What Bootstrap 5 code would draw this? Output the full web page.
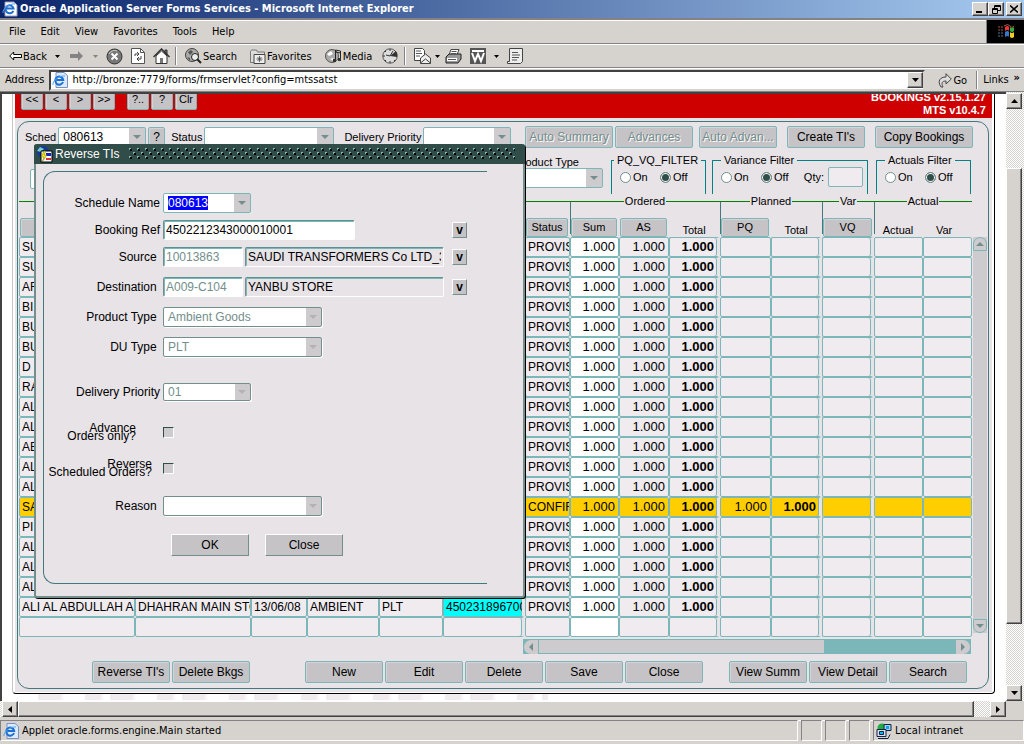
<!DOCTYPE html>
<html lang="en">
<head>
<meta charset="utf-8">
<meta name="viewport" content="width=device-width, initial-scale=1">
<title>Oracle Application Server Forms Services</title>
<link href="https://cdn.jsdelivr.net/npm/bootstrap@5.3.0/dist/css/bootstrap.min.css" rel="stylesheet">
<style>
:root{--face:#d6d3ce;--teal:#7bb6b8;--deep:#42797b;--ap:#e7e3e7;--key:#c6c3c6}
body{font-family:"DejaVu Sans Condensed","DejaVu Sans",sans-serif;font-size:11px;line-height:14px;color:#000;background:var(--face)}
a{color:#000;text-decoration:none}
button,input,select{font:inherit;color:inherit;border-radius:0;padding:0}
button{line-height:1}
svg{display:block;flex:none}
/* browser window */
.titlebar{height:18px;padding:0 2px;gap:2px;background:linear-gradient(90deg,#0a246a,#a6caf0);color:#fff;font-weight:700}
.raised{background:var(--face);border:1px solid;border-color:#fff #424142 #424142 #fff;box-shadow:inset -1px -1px #848284;display:flex;align-items:center;justify-content:center;flex:none}
.winkey{width:16px;height:14px}
.chrome-bar{border-top:1px solid #fff;border-bottom:1px solid #848284;background:var(--face)}
.menubar{height:26px;border-top:2px solid #848284;box-shadow:inset 0 1px #fff}
.menubar nav{gap:15px;padding-left:9px}
.flagbox{width:38px;background:#000;border-left:1px solid #848284}
.toolbar{height:24px;padding-left:9px}
.toolbtn{background:none;border:0;display:flex;align-items:center;gap:1px}
.s5{margin-left:5px}.s10{margin-left:10px}.s13{margin-left:13px}
.vsep{width:2px;height:18px;border-left:1px solid #848284;border-right:1px solid #fff}
.addressbar{height:24px;padding-left:5px;gap:5px}
.addrbox{height:21px;background:#fff;border:2px solid;border-color:#424142 var(--face) var(--face) #424142;padding:0 0 0 1px}
.addrbox input{border:0;outline:0;background:none}
.sbtn{width:16px;height:16px}
.track{background:conic-gradient(#fff 25%,var(--face) 0 50%,#fff 0 75%,var(--face) 0) 0 0/2px 2px}
.view{border-top:2px solid #424142;border-left:2px solid #424142;background:#fff;overflow:hidden}
.statusbar{height:27px;border-top:3px solid var(--face);gap:3px;padding-bottom:3px;box-shadow:inset 0 1px #fff}
.pane{border:1px solid;border-color:#848284 #fff #fff #848284;padding:0 2px;display:flex;align-items:center;gap:3px}
.pane-s{width:21px}
/* forms applet */
.applet{position:relative;margin:0 11px 0 10px;padding:0 2px 1px;border:solid;border-width:0 1px 1px;border-color:#000 #000 #000 #c6c3c6;border-radius:0 0 4px 4px;font-family:"Liberation Sans",Arial,sans-serif;font-size:12px}
.sheet{background:var(--ap);padding-bottom:3px}
.redband{height:24px;background:#ce0000;overflow:hidden;padding:0 6px 0 6px;color:#fff;font-weight:700;font-size:11px}
.redband .keys{padding-bottom:8px;gap:2px;color:#000;font-weight:400}
.versions{line-height:13px;padding-bottom:1px}
.fkey{background:var(--key);border:1px solid var(--teal);border-radius:2px;box-shadow:inset 1px 1px #d6d3d6;white-space:nowrap;overflow:hidden;height:22px;font-size:12px;flex:none}
.redband .fkey{width:22px;font-size:11px}
.w78{width:78px}.w88{width:88px}.w98{width:98px}
.fkey:disabled{color:#738e8c;text-shadow:1px 1px #fff}
.main-panel{margin:3px 3px 0 2px;border:1px solid var(--deep);border-radius:12px;padding:4px 1px 5px}
.combo{appearance:none;height:20px;border:1px solid var(--teal);border-radius:2px;outline:0;padding:0 20px 0 4px;background:url("data:image/svg+xml,%3Csvg xmlns='http://www.w3.org/2000/svg' width='8' height='4'%3E%3Cpath d='M0 0h8L4 4z' fill='%23738e8c'/%3E%3C/svg%3E") right 4px center no-repeat,linear-gradient(#cecbce,#cecbce) right/16px 100% no-repeat,#fff}
.sunk{height:20px;border:1px solid;border-color:#5a9294 #fff #fff #738e8c;box-shadow:inset 1px 1px var(--teal);border-radius:2px;background:#fff;padding:0 2px;outline:0;font-size:12px}
.dis{color:#738e8c;opacity:1}
.combo.dis{border-color:#738e8c;box-shadow:1px 1px #fff;background:url("data:image/svg+xml,%3Csvg xmlns='http://www.w3.org/2000/svg' width='8' height='4'%3E%3Cpath d='M0 0h8L4 4z' fill='%23b5b2b5'/%3E%3C/svg%3E") right 4px center no-repeat,linear-gradient(#cecbce,#cecbce) right/15px 100% no-repeat,#fff}
.find-row{gap:2px;padding-left:6px}
.find-row>label,.filter-row{font-size:11px}
.filter-row{height:46px;padding-top:5px}
.filterset{border:1px solid #008284;border-bottom:0;height:41px;padding:0 4px;margin:0;min-width:0;flex:none}
.filterset legend{float:none;width:auto;margin:0;font-size:11px;line-height:14px;padding:0 3px;white-space:nowrap}
.pick{display:flex;align-items:center;gap:2px;width:40px}
.pick input{appearance:none;width:11px;height:11px;border:1px solid #738e8c;border-radius:50%;background:#fff;margin:0;flex:none}
.pick input:checked{background:#314d4a;box-shadow:inset 0 0 0 1px #fff}
.bookings{table-layout:fixed;border-collapse:separate;border-spacing:0;width:100%}
.bookings td{height:20px;border:1px solid var(--teal);border-radius:2px;padding:0 2px;line-height:18px;overflow:hidden;white-space:nowrap;background:#efebef padding-box}
.bookings td.gap{border-right:3px solid var(--ap);box-shadow:inset -1px 0 var(--teal)}
.bookings td.num{text-align:right;padding-right:3px;font-size:13px}
.bookings tr.hot td{background-color:#ffce00}
.bookings td.cy{background-color:#0ff}
.bookings th{font-weight:400;font-size:11px;padding:0;text-align:center}
.bookings .grp th{height:14px;line-height:14px;background:linear-gradient(#008200,#008200) 0 7px/100% 1px no-repeat}
.bookings .grp span{background:var(--ap);padding:0 1px}
.bookings .heads th{height:29px;vertical-align:bottom;padding:0 2px 0 1px;line-height:14px}
.bookings .fkey{height:19px;width:100%;display:block;font-size:11px}
.bookings .grp .bar{background-size:100% 1px,1px 7px;background-image:linear-gradient(#008200,#008200),linear-gradient(var(--deep),var(--deep));background-position:0 7px,0 7px}
.bookings .heads .bar{background:linear-gradient(var(--deep),var(--deep)) 0 0/1px 26px no-repeat}
.gridscroll{width:14px;margin:43px 1px 0 1px;background:#cecbce}
.mini{width:14px;height:14px;border:1px solid var(--teal);background:#cecbce;padding:0;display:flex;align-items:center;justify-content:center;flex:none}
.hbar{height:15px;border:1px solid var(--teal);background:var(--teal);margin:2px 16px 0 504px}
.actions{margin-top:7px;padding:0 20px 0 73px;gap:2px}
.watermark{height:6px;margin-left:36px;width:510px;background:repeating-linear-gradient(90deg,#efebef 0 22px,#fff 26px 46px,#efebef 48px 62px,#fff 66px 72px)}
/* dialog window lying over the bookings block */
.dlg{position:absolute;left:21px;top:50px;width:491px;background:var(--ap);border:2px solid #738e8c;border-top:0;border-radius:3px;box-shadow:1px 1px #000;padding-bottom:12px}
.dlg-title{height:20px;background:#314d4a;color:#fff;margin:0 -2px;padding:0 10px 0 3px;border-radius:3px 3px 0 0;font-size:12px;gap:2px}
.studs{height:12px;margin-left:8px;background:url("data:image/svg+xml,%3Csvg xmlns='http://www.w3.org/2000/svg' width='8' height='12'%3E%3Cg fill='%23000'%3E%3Cpath d='M1 1h2v2H1zM5 5h2v2H5zM1 9h2v2H1z'/%3E%3C/g%3E%3Cg fill='%237bb6b8'%3E%3Cpath d='M0 0h2v1H1v1H0zM4 4h2v1H5v1H4zM0 8h2v1H1v1H0z'/%3E%3C/g%3E%3C/svg%3E")}
.dlg-form{margin:7px 36px 0 7px;border:1px solid var(--deep);border-right:0;border-radius:12px 0 0 12px;padding:21px 20px 27px 0}
.frow{display:flex;align-items:center;height:20px;margin-bottom:10px;gap:2px}
.flabel{width:116px;text-align:right;margin-right:1px;flex:none;white-space:nowrap;font-size:12px}
.flabel.two{line-height:8px;padding-right:24px}
.flabel.two.near{padding-right:8px}
.vkey{width:15px;height:16px;margin-left:auto;background:var(--key);border:1px solid;border-color:#fff #738e8c #738e8c #fff;font-weight:700;font-size:12px;flex:none}
.okkey{width:78px;height:22px;background:var(--key);border:1px solid;border-color:#fff #738e8c #738e8c #fff;font-size:12px}
.tick{appearance:none;width:11px;height:11px;margin:0;border:1px solid;border-color:#314d4a #fff #fff #314d4a;background:#cecbce}
.tight{margin-bottom:7px}.after-types{margin-bottom:25px}.after-prio{margin-bottom:20px}.after-more{margin-bottom:18px}.after-adv{margin-bottom:16px}
.f80{width:80px}.f88{width:88px}.f160{width:159px}.f192{width:192px}.f200{width:199px}
#schedName::selection{background:#00f;color:#fff}
</style>
</head>
<body class="d-flex flex-column min-vh-100">
<header>
  <div class="titlebar d-flex align-items-center">
    <svg width="16" height="16" viewBox="0 0 16 16"><path d="M3 1h9l3 3v11H3z" fill="#fff" stroke="#99b"/><path d="M11.300 9.800A4 4 0 1 1 11.500 7.500H4.500" fill="none" stroke="#1c6fd0" stroke-width="2"/><path d="M1 12C0 8 8 2 13 3" fill="none" stroke="#52a7f0"/></svg>
    <span class="me-auto text-nowrap">Oracle Application Server Forms Services - Microsoft Internet Explorer</span>
    <div class="d-flex"><button class="raised winkey" aria-label="Minimize"><svg width="8" height="8"><path d="M0 6h6v2H0z"/></svg></button>
    <button class="raised winkey" aria-label="Restore"><svg width="9" height="9" fill="none" stroke="#000"><path d="M2.500 3V.5h6v5H6M2.500 1.500h6M.5 3.500h5v5h-5zM.5 4.500h5"/></svg></button></div>
    <button class="raised winkey" aria-label="Close window"><svg width="8" height="8" stroke="#000" stroke-width="1.600"><path d="M0 .5l8 7M8 .5l-8 7"/></svg></button>
  </div>
  <div class="menubar chrome-bar d-flex">
    <nav class="d-flex align-items-center flex-grow-1"><a href="#">File</a><a href="#">Edit</a><a href="#">View</a><a href="#">Favorites</a><a href="#">Tools</a><a href="#">Help</a></nav>
    <div class="flagbox d-flex align-items-center justify-content-center"><svg width="18" height="16" viewBox="0 0 18 16"><path d="M8 3q3-2 4 0v4q-1-2-4 0z" fill="#e33"/><path d="M13 3q2 2 4 0v4q-2 2-4 0z" fill="#3a4"/><path d="M8 8q3-2 4 0v5q-1-2-4 0z" fill="#37c"/><path d="M13 8q2 2 4 0v5q-2 2-4 0z" fill="#ec2"/><path d="M7 2q4-3 6 0t4 0M1 3h2m1 0h2M1 6h2m1 0h2" stroke="#a54" fill="none"/><path d="M1 9h2m1 0h2M1 12h2m1 0h2" stroke="#579"/></svg></div>
  </div>
  <div class="toolbar chrome-bar d-flex align-items-center">
    <button class="toolbtn"><svg width="13" height="12" fill="#fff" stroke="#000"><path d="M.7 6l4-4v2.500h7.800v3H4.700V10z"/></svg>Back</button>
    <svg class="ms-2" width="5" height="3"><path d="M0 0h5L2.500 3z"/></svg>
    <svg class="s10" width="13" height="12" fill="#848284"><path d="M13 6L8 1v3H0v4h8v3z"/></svg>
    <svg class="s10" width="5" height="3"><path d="M0 0h5L2.500 3z" fill="#848284"/></svg>
    <button class="toolbtn ms-2" aria-label="Stop"><svg width="17" height="17" viewBox="0 0 17 17"><circle cx="8.500" cy="8.500" r="7.500" fill="#777" stroke="#333"/><path d="M3 6a6 6 0 0 1 8-3" stroke="#ccc" fill="none"/><path d="M5.500 5.500l6 6m0-6l-6 6" stroke="#fff" stroke-width="2"/></svg></button>
    <button class="toolbtn ms-2" aria-label="Refresh"><svg width="14" height="16" viewBox="0 0 14 16"><path d="M.5.500h9l4 4v11H.5z" fill="#fff" stroke="#555"/><path d="M9.500.5v4h4" fill="none" stroke="#555"/><path d="M4 8V6h4M6 4l2 2-2 2M10 8v3H6m2 2l-2-2 2-2" fill="none" stroke="#444"/></svg></button>
    <button class="toolbtn ms-2" aria-label="Home"><svg width="17" height="16" viewBox="0 0 17 16"><path d="M12 2h2v5h-2z" fill="#777" stroke="#333"/><path d="M3 8v7.500h11V8L8.500 3z" fill="#fff" stroke="#333"/><path d="M.5 9l8-8 8 8" fill="none" stroke="#333" stroke-width="1.500"/><path d="M7 10h3v5H7z" fill="#777"/></svg></button>
    <div class="vsep s5 me-2"></div>
    <button class="toolbtn"><svg width="17" height="16" viewBox="0 0 17 16"><circle cx="7" cy="7" r="6.500" fill="#aaa" stroke="#444"/><path d="M3 4l3-2 2 2-3 3zM2 9l3 1v3" fill="#555"/><circle cx="10" cy="9" r="3.500" fill="#eee" stroke="#222"/><path d="M12 11l4 4" stroke="#222" stroke-width="2"/></svg>Search</button>
    <button class="toolbtn s13"><svg width="16" height="15" viewBox="0 0 16 15"><path d="M.5 13.500v-11l1-1.500h5l1 2h7v10.500z" fill="#ddd" stroke="#777"/><path d="M4 5.500h11v9H4z" fill="#eee" stroke="#444"/><path d="M9.500 7v6M6.500 10h6M7.500 8l4 4m0-4l-4 4" stroke="#444" stroke-width=".8"/></svg>Favorites</button>
    <button class="toolbtn s13"><svg width="17" height="16" viewBox="0 0 17 16"><circle cx="7" cy="8" r="6.500" fill="#aaa" stroke="#555"/><path d="M2 6l4-3 2 3-4 2zM5 11l3-1 1 3z" fill="#fff"/><path d="M10.500 12V2l5 1v8M10.500 4l5 1" fill="none" stroke="#222"/><path d="M8 11h3v3H8zM13 10h3v3h-3z" fill="#333"/></svg>Media</button>
    <button class="toolbtn s10" aria-label="History"><svg width="17" height="16" viewBox="0 0 17 16"><circle cx="8" cy="8" r="7.200" fill="#ddd" stroke="#555"/><path d="M8 8l6-5a7 7 0 0 1 1 6z" fill="#333"/><path d="M8 8L4 7M8 8l3-5M8 1v2M1 8h2m5 5v2M3 3l1 1m-1 9l1-1m9 1l-1-1" stroke="#333"/></svg></button>
    <div class="vsep s5 me-1"></div>
    <button class="toolbtn ms-1" aria-label="Mail"><svg width="17" height="16" viewBox="0 0 17 16"><path d="M.5.500h8l2 2v10H.5z" fill="#fff" stroke="#444"/><path d="M2 3h5M2 5.500h6M2 8h4" stroke="#555"/><path d="M6.500 10l5-4 5 4v5.500h-10z" fill="#eee" stroke="#444"/><path d="M6.500 15l5-4 5 4" fill="none" stroke="#444"/></svg></button>
    <svg class="ms-1" width="5" height="3"><path d="M0 0h5L2.500 3z"/></svg>
    <button class="toolbtn s5" aria-label="Print"><svg width="17" height="15" viewBox="0 0 17 15"><path d="M4 6L6 .5h8L12 6" fill="#fff" stroke="#444"/><path d="M1 8l3-3h12v5l-3 4H1z" fill="#999" stroke="#222"/><path d="M2 9h10v3H2z" fill="#fff"/><path d="M6.500 2.500h5M6 4.500h5M3 10.500h8" stroke="#555"/></svg></button>
    <button class="toolbtn ms-2" aria-label="Edit with Word"><svg width="16" height="16" viewBox="0 0 16 16"><path d="M0 0h16v16H0z" fill="#555"/><path d="M2 3h12M2 5l3 8 3-7 3 7 3-8" fill="none" stroke="#fff" stroke-width="2"/></svg></button>
    <svg class="ms-2" width="5" height="3"><path d="M0 0h5L2.500 3z"/></svg>
    <button class="toolbtn ms-2" aria-label="Discuss"><svg width="16" height="16" viewBox="0 0 16 16"><path d="M2.500.500h13v13l-2 2H.5v-2h2z" fill="#eee" stroke="#444"/><path d="M5 4.500h6M5 7h8M5 9.500h7M5 12h5" stroke="#555"/></svg></button>
  </div>
  <div class="addressbar chrome-bar d-flex align-items-center">
    <label for="addr">Address</label>
    <div class="addrbox d-flex align-items-center flex-grow-1">
      <svg width="16" height="16" viewBox="0 0 16 16"><path d="M4 .5h8l3.500 3v12H4z" fill="#dceaff" stroke="#7b8fc0"/><path d="M11 10A4 4 0 1 1 11.200 8H4.500" fill="none" stroke="#1c6fd0" stroke-width="2"/><path d="M1 13C0 9 8 3 13 4" fill="none" stroke="#52a7f0"/></svg>
      <input id="addr" class="flex-grow-1 ms-1" value="http://bronze:7779/forms/frmservlet?config=mtssatst">
      <button class="raised sbtn" aria-label="Show addresses"><svg width="7" height="4"><path d="M0 0h7L3.500 4z"/></svg></button>
    </div>
    <button class="toolbtn ms-2 me-1"><svg width="14" height="15" viewBox="0 0 14 15"><path d="M3 14C-1 8 2 4 8 4V.7L13.300 6 8 11V8C4 8 3 10 5 14z" fill="#ddd" stroke="#444"/></svg>Go</button>
    <div class="vsep"></div><a href="#">Links</a><a href="#" class="pe-1 mb-1 fw-bold" aria-label="More links">»</a>
  </div>
</header>

<main class="d-flex flex-grow-1">
  <div class="view flex-grow-1">
    <div class="applet"><div class="sheet">
      <div class="redband d-flex justify-content-between align-items-end">
        <div class="keys d-flex"><button class="fkey">&lt;&lt;</button><button class="fkey">&lt;</button><button class="fkey">&gt;</button><button class="fkey">&gt;&gt;</button><button class="fkey s10">?..</button><button class="fkey">?</button><button class="fkey">Clr</button></div>
        <div class="versions text-end text-nowrap">BOOKINGS v2.15.1.27<br>MTS v10.4.7</div>
      </div>
      <section class="main-panel">
        <div class="find-row d-flex align-items-center">
          <label for="sched">Sched</label>
          <select id="sched" class="combo f88 flex-shrink-0"><option>080613</option></select>
          <button class="fkey" style="width:17px;height:20px">?</button>
          <label for="stat" class="ms-1">Status</label>
          <select id="stat" class="combo" style="width:130px"><option></option></select>
          <label for="dprio" class="ms-2 text-nowrap">Delivery Priority</label>
          <select id="dprio" class="combo w88 flex-shrink-0"><option></option></select>
          <div class="d-flex flex-grow-1 justify-content-end" style="gap:2px;padding-right:14px">
            <button class="fkey w88" disabled>Auto Summary</button><button class="fkey w78 me-1" disabled>Advances</button><button class="fkey w78 me-2" disabled>Auto Advan...</button><button class="fkey w78 me-2">Create TI's</button><button class="fkey w98">Copy Bookings</button>
          </div>
        </div>
        <div class="filter-row d-flex">
          <input class="combo me-auto w88 mt-3" style="margin-left:11px" aria-label="Product filter">
          <div style="width:98px" class="me-2 pt-1 flex-shrink-0"><label for="ptype" class="d-block text-end pe-4 text-nowrap" style="line-height:11px">Product Type</label><select id="ptype" class="combo w-100"><option></option></select></div>
          <fieldset class="filterset" style="width:95px"><legend style="margin-left:-2px">PQ_VQ_FILTER</legend><div class="d-flex ps-1" style="padding-top:3px"><label class="pick"><input type="radio" name="pq">On</label><label class="pick"><input type="radio" name="pq" checked>Off</label></div></fieldset>
          <fieldset class="filterset" style="width:156px;margin-left:6px"><legend class="ms-1">Variance Filter</legend><div class="d-flex align-items-center ps-1"><label class="pick"><input type="radio" name="vf">On</label><label class="pick"><input type="radio" name="vf" checked>Off</label><label for="qty" class="ms-auto me-1">Qty:</label><input id="qty" class="combo" style="width:35px;background:#efebef"></div></fieldset>
          <fieldset class="filterset me-3" style="width:95px;margin-left:8px"><legend class="ms-1">Actuals Filter</legend><div class="d-flex ps-1" style="padding-top:3px"><label class="pick"><input type="radio" name="af">On</label><label class="pick"><input type="radio" name="af" checked>Off</label></div></fieldset>
        </div>
        <div class="d-flex">
          <table class="bookings">
            <colgroup><col style="width:116px"><col style="width:116px"><col style="width:56px"><col style="width:72px"><col style="width:64px"><col style="width:82px"><col style="width:45px"><col style="width:49px"><col style="width:50px"><col style="width:51px"><col style="width:51px"><col style="width:51px"><col style="width:52px"><col style="width:49px"><col style="width:49px"></colgroup>
            <thead>
              <tr class="grp"><th colspan="7"></th><th colspan="3" class="bar"><span>Ordered</span></th><th colspan="2" class="bar"><span>Planned</span></th><th class="bar"><span>Var</span></th><th colspan="2" class="bar"><span>Actual</span></th></tr>
              <tr class="heads"><th><button class="fkey" aria-label="Source"></button></th><th></th><th></th><th></th><th></th><th></th><th><button class="fkey">Status</button></th><th class="bar"><button class="fkey">Sum</button></th><th><button class="fkey">AS</button></th><th>Total</th><th class="bar"><button class="fkey">PQ</button></th><th>Total</th><th class="bar"><button class="fkey">VQ</button></th><th class="bar">Actual</th><th class="pe-2">Var</th></tr>
            </thead>
            <tbody id="rows"></tbody>
          </table>
          <div class="gridscroll d-flex flex-column justify-content-between mb-1">
            <button class="mini" style="border-radius:7px 7px 0 0" aria-label="Row up"><svg width="8" height="4"><path d="M0 4h8L4 0z" fill="#738e8c"/></svg></button>
            <button class="mini" style="border-radius:0 0 7px 7px" aria-label="Row down"><svg width="8" height="4"><path d="M0 0h8L4 4z" fill="#738e8c"/></svg></button>
          </div>
        </div>
        <div class="hbar d-flex align-items-center">
          <button class="mini border-0" aria-label="Scroll left" style="border-radius:7px 0 0 7px"><svg width="4" height="8"><path d="M4 0v8L0 4z" fill="#738e8c"/></svg></button>
          <div class="h-100" style="width:64%;background:#cecbce;margin-left:1px"></div>
          <button class="mini border-0 ms-auto" aria-label="Scroll right" style="border-radius:0 7px 7px 0"><svg width="4" height="8"><path d="M0 0v8l4-4z" fill="#738e8c"/></svg></button>
        </div>
        <div class="actions d-flex">
          <button class="fkey w78">Reverse TI's</button><button class="fkey w78 me-auto">Delete Bkgs</button>
          <button class="fkey w78 ms-4">New</button><button class="fkey w78">Edit</button><button class="fkey w78">Delete</button><button class="fkey w78">Save</button><button class="fkey w78 me-4">Close</button>
          <button class="fkey w78">View Summ</button><button class="fkey w78">View Detail</button><button class="fkey w78">Search</button>
        </div>
      </section>
      </div>
      <section class="dlg" role="dialog" aria-label="Reverse TIs">
        <div class="dlg-title d-flex align-items-center">
          <svg width="16" height="17" viewBox="0 0 16 17"><circle cx="6" cy="6" r="6" fill="#113a9c"/><path d="M0 5l3-4 4 2-3 3z" fill="#7cc"/><path d="M4 5h11v11H4z" fill="#fff" stroke="#000"/><path d="M9 7h5v3H9z" fill="#12c"/><path d="M9 12h5v2H9z" fill="#d33"/><path d="M7 5l-3 6h3l-2 5 5-7H7l2-4z" fill="#fe0" stroke="#660" stroke-width=".5"/></svg>
          <span class="text-nowrap">Reverse TIs</span><div class="studs flex-grow-1"></div>
        </div>
        <form class="dlg-form" onsubmit="return false">
          <div class="frow tight"><label class="flabel" for="schedName">Schedule Name</label><input id="schedName" class="combo f88" value="080613"></div>
          <div class="frow tight"><label class="flabel" for="bref">Booking Ref</label><input id="bref" class="sunk f192" value="4502212343000010001"><button type="button" class="vkey" aria-label="List bookings">v</button></div>
          <div class="frow"><label class="flabel" for="src">Source&nbsp;</label><input id="src" class="sunk dis f80" value="10013863"><input aria-label="Source name" class="sunk f200 bg-transparent" value="SAUDI TRANSFORMERS Co LTD_33"><button type="button" class="vkey" aria-label="List sources">v</button></div>
          <div class="frow"><label class="flabel" for="dst">Destination&nbsp;</label><input id="dst" class="sunk dis f80" value="A009-C104"><input aria-label="Destination name" class="sunk f200 bg-transparent" value="YANBU STORE"><button type="button" class="vkey" aria-label="List destinations">v</button></div>
          <div class="frow"><label class="flabel" for="pt">Product Type&nbsp;</label><select id="pt" class="combo dis f160" disabled><option>Ambient Goods</option></select></div>
          <div class="frow after-types"><label class="flabel" for="du">DU Type&nbsp;</label><select id="du" class="combo dis f160" disabled><option>PLT</option></select></div>
          <div class="frow after-prio"><label class="flabel" for="dp">Delivery Priority</label><select id="dp" class="combo dis f88" style="height:18px" disabled><option>01</option></select></div>
          <div class="frow after-adv"><label class="flabel two" for="adv">Advance<br>Orders only?</label><input type="checkbox" id="adv" class="tick"></div>
          <div class="frow after-more"><label class="flabel two near" for="rev">Reverse<br>Scheduled Orders?</label><input type="checkbox" id="rev" class="tick"></div>
          <div class="frow after-more"><label class="flabel" for="why">Reason&nbsp;</label><select id="why" class="combo dis f160"><option></option></select></div>
          <div class="d-flex gap-3" style="padding-left:127px"><button class="okkey">OK</button><button class="okkey">Close</button></div>
        </form>
      </section>
    </div>
    <div class="watermark"></div>
  </div>
  <div class="track d-flex flex-column" style="width:18px;padding:1px 2px 0 0">
    <button class="raised sbtn" aria-label="Page up"><svg width="7" height="4"><path d="M0 4h7L3.500 0z"/></svg></button>
    <div class="flex-grow-1 d-flex flex-column"><div style="flex:59"></div><div class="raised" style="flex:456"></div><div style="flex:61"></div></div>
    <button class="raised sbtn" aria-label="Page down"><svg width="7" height="4"><path d="M0 0h7L3.500 4z"/></svg></button>
  </div>
</main>
<div class="track d-flex" style="padding-left:2px;height:16px">
  <button class="raised sbtn" aria-label="Page left"><svg width="4" height="7"><path d="M4 0v7L0 3.500z"/></svg></button>
  <div class="raised flex-grow-1"></div>
  <button class="raised sbtn ms-3" aria-label="Page right"><svg width="4" height="7"><path d="M0 0v7l4-3.500z"/></svg></button>
  <div style="width:18px;background:var(--face)"></div>
</div>
<footer class="statusbar d-flex">
  <div class="pane flex-grow-1"><svg width="16" height="16" viewBox="0 0 16 16"><path d="M4 .5h8l3.500 3v12H4z" fill="#dceaff" stroke="#7b8fc0"/><path d="M11 10A4 4 0 1 1 11.200 8H4.500" fill="none" stroke="#1c6fd0" stroke-width="2"/><path d="M1 13C0 9 8 3 13 4" fill="none" stroke="#52a7f0"/></svg>Applet oracle.forms.engine.Main started</div>
  <div class="pane pane-s"></div><div class="pane pane-s"></div><div class="pane pane-s"></div>
  <div class="pane" style="width:151px"><svg width="16" height="16" viewBox="0 0 16 16"><circle cx="6" cy="5" r="4.500" fill="#2a4"/><path d="M8 1.500h7v6H8z" fill="#ace" stroke="#124"/><path d="M10 3h3v3h-3z" fill="#0ae"/><path d="M1 6.500h9v7H1z" fill="#dde" stroke="#124"/><path d="M3.500 8.500h4v3h-4z" fill="#0bf" stroke="#124"/><path d="M2 15.500h10l2-4" stroke="#124" fill="none"/></svg>Local intranet</div>
</footer>
<script src="https://cdn.jsdelivr.net/npm/bootstrap@5.3.0/dist/js/bootstrap.bundle.min.js"></script>
<script>
// One entry per booking line: first column text; line 13 is the confirmed one, the last line is blank.
const names = ["SU","SU","AR","BI","BU","BU","D","RA","AL","AL","AB","AL","AL","SA","PI","AL","AL","AL","ALI AL ABDULLAH A",""];
const q = "1.000";
document.getElementById("rows").innerHTML = names.map((n, i) => {
  const hot = i === 13, full = i === 18, blank = i === 19;
  const v = blank ? "" : q, p = hot ? q : "";
  return `<tr class="${hot ? "hot" : ""}"><td>${n}</td><td>${full ? "DHAHRAN MAIN STO" : ""}</td><td>${full ? "13/06/08" : ""}</td><td>${full ? "AMBIENT" : ""}</td><td>${full ? "PLT" : ""}</td><td class="gap ${full ? "cy" : ""}">${full ? "450231896700" : ""}</td><td>${blank ? "" : hot ? "CONFIR" : "PROVIS"}</td><td class="num ${hot ? "" : "bg-white"}">${v}</td><td class="num">${v}</td><td class="num gap fw-bold">${v}</td><td class="num">${p}</td><td class="num gap fw-bold">${p}</td><td class="gap"></td><td></td><td></td></tr>`;
}).join("");
document.getElementById("schedName").select();
</script>
</body>
</html>
